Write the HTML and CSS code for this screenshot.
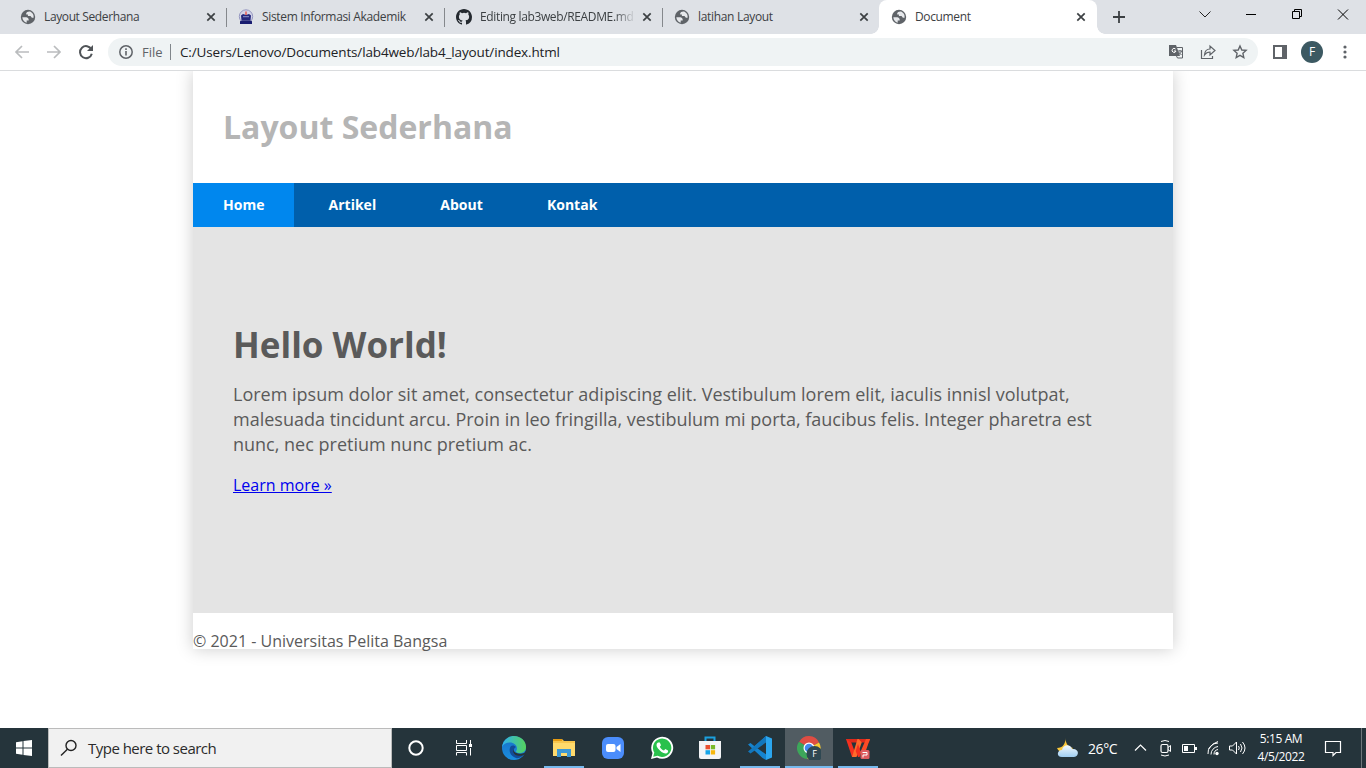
FILE: index.html
```html
<!DOCTYPE html>
<html lang="en">
<head>
<meta charset="utf-8">
<title>Document</title>
<link rel="stylesheet" href="styles.css">
</head>
<body>
<svg width="0" height="0" class="defs">
  <defs>
    <symbol id="globe" viewBox="0 0 16 16"><circle cx="8" cy="8" r="7.200" fill="#5f6368"/><path d="M2.300 8.200h4.200q2 .2 2.200 2.200v1H6.700v2.300Q2.800 12.600 2.300 8.200zM10.200 2.600Q6.500 2.300 6.200 4.300v1.300h1.700v1.500h2.600l1.400 1.700h1.700q.5-4.200-3.400-6.200z" fill="#e6e8eb"/></symbol>
    <symbol id="close" viewBox="0 0 10 10"><path d="M1.3 1.3 8.7 8.7M8.7 1.3 1.3 8.7" stroke="#3c4043" stroke-width="1.7"/></symbol>
    <linearGradient id="edge-top"><stop offset="0" stop-color="#2fb1ee"/><stop offset="1" stop-color="#55d35b"/></linearGradient>
    <linearGradient id="edge-body" x2="0" y2="1"><stop offset="0" stop-color="#176fc5"/><stop offset="1" stop-color="#1b8ee0"/></linearGradient>
    <linearGradient id="cloud" x2="0" y2="1"><stop offset="0" stop-color="#f4f9fd"/><stop offset="1" stop-color="#9fcdf1"/></linearGradient>
  </defs>
</svg>

<header class="browser">
  <div class="tabstrip">
    <div class="tab"><svg class="favicon"><use href="#globe"/></svg><span class="tab-title t1">Layout Sederhana</span><svg class="tab-close"><use href="#close"/></svg></div>
    <div class="tab divided"><svg class="favicon" viewBox="0 0 16 16"><circle cx="8" cy="7.5" r="6.7" fill="#d1d2e6" stroke="#9698c1"/><path d="M3 6.500 5 5l3 1 3-1 2 1.500-.5 5h-9z" fill="#24277c"/><path d="M5 7.200h6v1H5z" fill="#8d92cb"/><path d="M7.3 2.5h1.4V6H7.3z" fill="#e85147"/><path d="M2 12.300 4 11.500h8l2 .8V15H2z" fill="#191c70"/></svg><span class="tab-title t2">Sistem Informasi Akademik</span><svg class="tab-close"><use href="#close"/></svg></div>
    <div class="tab divided"><svg class="favicon" viewBox="0 0 16 16"><path fill="#24292f" d="M8 0C3.58 0 0 3.58 0 8c0 3.54 2.29 6.53 5.47 7.59.4.07.55-.17.55-.38 0-.19-.01-.82-.01-1.49-2.01.37-2.53-.49-2.69-.94-.09-.23-.48-.94-.82-1.13-.28-.15-.68-.52-.01-.53.63-.01 1.08.58 1.23.82.72 1.21 1.87.87 2.33.66.07-.52.28-.87.51-1.07-1.78-.2-3.64-.89-3.64-3.95 0-.87.31-1.59.82-2.15-.08-.2-.36-1.02.08-2.12 0 0 .67-.21 2.2.82a7.5 7.5 0 0 1 4 0c1.53-1.04 2.2-.82 2.2-.82.44 1.1.16 1.92.08 2.12.51.56.82 1.27.82 2.15 0 3.07-1.87 3.75-3.65 3.95.29.25.54.73.54 1.48 0 1.07-.01 1.93-.01 2.2 0 .21.15.46.55.38A8 8 0 0 0 16 8c0-4.42-3.58-8-8-8z"/></svg><span class="tab-title t3 faded">Editing lab3web/README.md</span><svg class="tab-close"><use href="#close"/></svg></div>
    <div class="tab divided"><svg class="favicon"><use href="#globe"/></svg><span class="tab-title t4">latihan Layout</span><svg class="tab-close"><use href="#close"/></svg></div>
    <div class="tab active"><svg class="favicon"><use href="#globe"/></svg><span class="tab-title t5">Document</span><svg class="tab-close"><use href="#close"/></svg></div>
    <svg class="new-tab" viewBox="0 0 12 12"><path d="M6 0v12M0 6h12" stroke="#3c4043" stroke-width="1.8"/></svg>
    <div class="window-controls">
      <svg viewBox="0 0 46 28"><path d="m17.5 11.5 5.5 5.500 5.500-5.500" fill="none" stroke="#222"/></svg>
      <svg viewBox="0 0 46 28"><path d="M18 14.500h10" stroke="#000"/></svg>
      <svg viewBox="0 0 46 28"><path d="M18.500 11.500h7v7h-7zM20.500 11.500v-2h7v7h-2" fill="none" stroke="#000"/></svg>
      <svg viewBox="0 0 46 28"><path d="m18 9.500 10 10m0-10-10 10" stroke="#000"/></svg>
    </div>
  </div>
  <div class="toolbar">
    <svg class="nav-buttons" viewBox="0 0 108 36"><g fill="none" stroke-width="1.7"><path d="M29 18H16m6-6-6 6 6 6M47 18h13m-6-6 6 6-6 6" stroke="#babcbe"/><path d="M91.400 15.500a6 6 0 1 0 .4 4.200" stroke="#505458" stroke-width="2"/></g><path d="M93 11v6h-6z" fill="#505458"/></svg>
    <div class="address">
      <svg class="info" viewBox="0 0 16 16"><circle cx="8" cy="8" r="6.200" fill="none" stroke="#5f6368" stroke-width="1.500"/><path d="M8 7v4.500M8 4.300v1.600" stroke="#5f6368" stroke-width="1.600"/></svg>
      <span class="scheme">File</span><span class="url">C:/Users/Lenovo/Documents/lab4web/lab4_layout/index.html</span>
      <svg class="address-actions" viewBox="0 0 82 18"><path d="M1 2h7l4 11H1z" fill="#5f6368"/><path d="M9 4.500h5.500v10.500H9.500L8.500 13M10 8h4m-2-1v1m1.500 0c-.5 2-2 3-3 3.500m0-2.500 3 3" stroke="#5f6368" fill="none"/><path d="M7.500 6A2 2 0 1 0 8 8H6" fill="none" stroke="#fff"/><g fill="none" stroke="#5f6368"><path d="M33.500 7v8.500h11V13" stroke-width="1.200"/><path d="M36.500 12c.3-4 2-6 5.500-6V3l5 4.500L42 12V9c-2.700 0-4 .8-5.500 3z" stroke-width="1.200"/><path d="m72 3 1.800 4 4.300.4-3.200 2.900.9 4.200-3.800-2.200-3.800 2.200.9-4.200-3.200-2.900 4.300-.4z" stroke-width="1.400"/></g></svg>
    </div>
    <svg class="side-panel" viewBox="0 0 14 14"><path d="M1 1h12v12H1z" fill="none" stroke="#5f6368" stroke-width="2"/><path d="M9 0h5v14H9z" fill="#5f6368"/></svg>
    <span class="avatar">F</span>
    <svg class="more" viewBox="0 0 4 14"><g fill="#5f6368"><circle cx="2" cy="2" r="1.600"/><circle cx="2" cy="7" r="1.600"/><circle cx="2" cy="12" r="1.600"/></g></svg>
  </div>
</header>

<main class="viewport">
  <div class="container">
    <header class="site-header"><h1>Layout Sederhana</h1></header>
    <nav class="site-nav"><a class="current">Home</a><a>Artikel</a><a>About</a><a>Kontak</a></nav>
    <section class="hero">
      <h1>Hello World!</h1>
      <p>Lorem ipsum dolor sit amet, consectetur adipiscing elit. Vestibulum lorem elit, iaculis innisl volutpat,<br>malesuada tincidunt arcu. Proin in leo fringilla, vestibulum mi porta, faucibus felis. Integer pharetra est<br>nunc, nec pretium nunc pretium ac.</p>
      <a href="#">Learn more »</a>
    </section>
    <footer class="site-footer"><p>© 2021 - Universitas Pelita Bangsa</p></footer>
  </div>
</main>

<footer class="taskbar">
  <div class="start"><svg width="16" height="16" viewBox="0 0 16 16"><path d="M0 2.200 6.500 1.300v6.200H0zM7.500 1.100 16 0v7.500H7.500zM0 8.500h6.500v6.200L0 13.800zM7.500 8.500H16V16l-8.500-1.100z" fill="#fff"/></svg></div>
  <div class="search"><svg width="18" height="18" viewBox="0 0 18 18"><g fill="none" stroke="#222" stroke-width="1.400"><circle cx="11" cy="6.500" r="5"/><path d="M7.400 10.200 1 16.500"/></g></svg><span>Type here to search</span></div>
  <div class="slot small"><svg viewBox="0 0 24 24"><circle cx="12" cy="12" r="6.700" fill="none" stroke="#fff" stroke-width="2"/></svg></div>
  <div class="slot small"><svg viewBox="0 0 24 24"><g fill="none" stroke="#fff"><path d="M4.500 4v3.500h10V4M4.500 19.500v-3h10v3M4.500 9.500h10v5h-10zM18.500 4v4M18.500 12v7.500"/></g><path d="M17 8h3v3h-3z" fill="#fff"/></svg></div>
  <div class="slot edge"><svg viewBox="0 0 24 24"><circle cx="12" cy="12" r="12" fill="url(#edge-body)"/><path d="M0 11C1 4 6 0 12 0c7 0 12 5 12 11 0 4-3 6-6.500 6-2 0-3.500-.7-3.500-1.500 0-.7 1-1.200 1-3C15 9 11.500 6.500 8 6.500c-4 0-7 2-8 4.500z" fill="url(#edge-top)"/><path d="M9 10c-3 4-1 10 5 12 3.500 1 7-2 8-4-4 2-8 .7-9.500-2C11 14 12 12 14 11c-1-1.500-3.500-2-5-1z" fill="#124c98"/><path d="M11.500 12.500c-1 4 5 6.500 10.500 4.500l2-2v3l-2.500 1c-4 2-10 .500-10.500-4z" fill="#26333a"/></svg></div>
  <div class="slot running"><svg viewBox="0 0 24 24"><path d="M1 3h9l2 2h11v15H1z" fill="#f8c64d"/><path d="M1 3h9v2H1z" fill="#e69b12"/><path d="M1 7h22v13H1z" fill="#ffda6c"/><path d="M5 13h14v8h-4v-4H9v4H5z" fill="#3d98d4"/></svg></div>
  <div class="slot"><svg viewBox="0 0 24 24"><rect x="1" y="1" width="22" height="22" rx="6" fill="#4b8dfb"/><rect x="5" y="8" width="9.500" height="8" rx="2" fill="#fff"/><path d="m15.500 11 4-3v8l-4-3z" fill="#fff"/></svg></div>
  <div class="slot"><svg viewBox="0 0 24 24"><path d="M1 23 2.500 17A11 11 0 1 1 7 21.500z" fill="#fff"/><path d="m3.200 20.800 1.100-4.200a9.200 9.200 0 1 1 3.300 3.200z" fill="#29c14c"/><path d="M8 6.500c-2 1-2 3.500 0 6s5 5 7.500 5c2 0 3-1.500 2.500-3L15.300 13l-1.300 1.500c-2-.7-3.400-2-4.200-3.800L11 9.300 9.800 6.500z" fill="#fff"/></svg></div>
  <div class="slot store"><svg viewBox="0 0 24 24"><path d="M7.500 5.500V1.500h9v4" fill="none" stroke="#1ba0df" stroke-width="2"/><path d="M1 5h22v16q0 2-2 2H3q-2 0-2-2z" fill="#f3f4f6"/><path d="M7.500 9H12v4.300H7.500z" fill="#e95030"/><path d="M12.800 9h4.300v4.300h-4.300z" fill="#79b928"/><path d="M7.500 14.200H12v4.300H7.500z" fill="#16a4e8"/><path d="M12.800 14.200h4.300v4.300h-4.300z" fill="#f7b70d"/></svg></div>
  <div class="slot running"><svg viewBox="0 0 24 24"><path d="M18 0 6.500 10.200 2.500 7 0 8.500 14.500 22l3.500 2 1-5-10-7 10-7z" fill="#1684cf"/><path d="M0 15.500 18 0v6.500L2.500 17.500z" fill="#1277bd"/><path d="m18 0 6 2.500v19L18 24z" fill="#2ba6ef"/></svg></div>
  <div class="slot running selected"><svg viewBox="0 0 24 24"><path d="M12 11.500 2.200 6A11 11 0 0 1 22 6.500z" fill="#df4d43"/><path d="m12 12-10-6.300A11 11 0 0 0 10.500 23z" fill="#3da65a"/><path d="M12 12 22 6.500A11 11 0 0 1 10.500 23z" fill="#f6c834"/><circle cx="12" cy="12" r="5.500" fill="#fff"/><circle cx="12" cy="12" r="4.300" fill="#4489ee"/><circle cx="17.500" cy="18" r="8" fill="#2f4852"/><text x="17.500" y="21" class="badge-letter">F</text></svg></div>
  <div class="slot running"><svg viewBox="0 0 24 24"><path d="M0 3h4l4.500 12L7 21H6z" fill="#f5301f"/><path d="M0 3h13l-1.200 3.500H5z" fill="#e02a1b"/><path d="M11.500 3H17l-6.500 18H6z" fill="#ff6a2b"/><path d="M12.500 3H24l-1.200 3.500h-7z" fill="#e02a1b"/><path d="M12 8l3 9-1.500 4h-1.500L9.700 15z" fill="#f5301f"/><path d="M20 3h4l-5 14h-5z" fill="#fb4a25"/><rect x="14.500" y="14" width="9" height="9" rx="1.500" fill="#dd5c5f"/><path d="M16.500 16.500h4.500v2.500h-4v2.500" fill="none" stroke="#fff"/></svg></div>
  <div class="tray">
    <svg class="weather" viewBox="0 0 24 22"><path d="M10 1c-1 5 2 9 7 10-3 6-14 6-16 0C7 11 9 7 10 1z" fill="#f9c73b"/><path d="M6 20c-6 0-5-7 0-7 1-6 9-6 10-1 7-1 8 7 2 8z" fill="url(#cloud)"/></svg>
    <span class="temp">26°C</span>
    <svg class="tray-icons" viewBox="0 0 116 20"><g fill="none" stroke="#fff"><path d="m2 12.500 5.500-5.500 5.500 5.500" stroke-width="1.200"/><rect x="28" y="6.500" width="7" height="8" rx="1.500" stroke-width="1.200"/><path d="m35 9.500 2.500-2v6L35 11.500M28 3.500q4-2 8 0M28 17q4 2 8 0"/><path d="M49.500 6.500h12v8h-12z"/><path d="M63 9v3" stroke-width="2"/><path d="M75 16a10 10 0 0 1 10-11M78 16.500a8 8 0 0 1 7-8M81 16.500a5 5 0 0 1 4-5M75.500 11q4-6 9.500-7.500"/><path d="M96.500 8h3l4-4v12l-4-4h-3zM105.500 8q1.500 2 0 4M107.500 6q3 4 0 8M109.500 4q5 6 0 12"/></g><path d="M51 8h4v5h-4z" fill="#fff"/><circle cx="84" cy="15.500" r="1.700" fill="#fff"/></svg>
    <div class="clock"><span>5:15 AM</span><span class="date">4/5/2022</span></div>
    <svg class="notice" viewBox="0 0 18 18"><path d="M1.500 2.500h15v11H12l-3 3v-3H1.500z" fill="none" stroke="#fff" stroke-width="1.200"/></svg>
  </div>
</footer>
</body>
</html>
```
FILE: styles.css
```css
* { box-sizing: border-box; }
body { margin: 0; width: 1366px; height: 768px; overflow: hidden; display: flex; flex-direction: column; background: #fff; font-family: "Open Sans", sans-serif; }
svg { display: block; flex: none; }

/* Browser window */
.browser { height: 71px; flex: none; border-bottom: 1px solid #dadcde; }
.tabstrip { height: 34px; display: flex; background: #dee1e6; padding-left: 8px; }
.tab { width: 218px; height: 34px; padding: 0 8px 0 12px; display: flex; align-items: center; }
.divided { background: linear-gradient(#85888c, #85888c) 0 8px / 1px 19px no-repeat; }
.tab.active { margin-left: -1px; background: #fff; border-radius: 8px 8px 0 0; position: relative; }
.tab.active::before, .tab.active::after { content: ""; position: absolute; bottom: 0; width: 8px; height: 8px; }
.tab.active::before { right: 100%; background: radial-gradient(circle at 0 0, transparent 7.5px, #fff 8px); }
.tab.active::after { left: 100%; background: radial-gradient(circle at 100% 0, transparent 7.5px, #fff 8px); }
.favicon { width: 16px; height: 16px; }
.tab-title { flex: 1; margin-left: 8px; overflow: hidden; white-space: nowrap; font-size: 12px; line-height: 20px; color: #3c4043; }
.tab-close { width: 10px; height: 10px; margin: 0 2px 0 6px; }
.t4 + .tab-close, .tab.active .tab-close { margin-right: 3px; }
.faded { -webkit-mask-image: linear-gradient(90deg, #000 86%, transparent); mask-image: linear-gradient(90deg, #000 86%, transparent); }
.t1 { letter-spacing: -.38px; }
.t2 { letter-spacing: -.34px; }
.t3 { letter-spacing: -.36px; }
.t4 { letter-spacing: -.32px; }
.t5 { letter-spacing: -.36px; }
.new-tab { width: 12px; height: 12px; margin: 11px 0 0 16px; }
.window-controls { display: flex; margin-left: auto; }
.window-controls svg { width: 46px; height: 28px; }
.toolbar { height: 36px; display: flex; align-items: center; }
.nav-buttons { width: 108px; height: 36px; }
.address { width: 1150px; height: 28px; border-radius: 14px; background: #eff3f4; display: flex; align-items: center; padding: 0 8px 0 10px; font-size: 14px; white-space: nowrap; }
.info { width: 16px; height: 16px; }
.scheme { color: #5f6368; margin-left: 8px; width: 29px; border-right: 1px solid #80868b; line-height: 16px; font-size: 13px; }
.url { color: #202124; margin-left: 9px; font-size: 13.5px; letter-spacing: -.14px; }
.address-actions { width: 82px; height: 18px; margin-left: auto; }
.side-panel { width: 14px; height: 14px; margin-left: 15px; }
.avatar { width: 22px; height: 22px; margin-left: 14px; border-radius: 50%; background: #3c5962; color: #fff; font: 12px/22px "Open Sans", sans-serif; text-align: center; }
.more { width: 4px; height: 14px; margin-left: 19.5px; }

/* Page */
.viewport { flex: 1; overflow: hidden; color: #5a5a5a; }
.container { width: 980px; height: 578px; margin: 0 auto; box-shadow: 0 0 16px #ccc; }
.site-header { height: 112px; padding: 40px 30px 0; }
.site-header h1 { margin: 0; font-size: 32px; line-height: 32px; color: #b5b5b5; }
.site-nav { display: flex; height: 44px; background: #005fab; }
.site-nav a { padding: 15px 30px; margin-right: 4.16px; color: #fff; font-size: 14px; font-weight: 700; line-height: 14px; }
.site-nav .current { background: #0087ee; }
.hero { height: 386px; background: #e4e4e4; padding: 100px 40px 0; font-size: 16px; line-height: 16px; }
.hero h1 { margin: 0; font-size: 35px; line-height: 35px; }
.hero p { margin: 20px 0 20px; font-size: 18px; line-height: 25px; white-space: nowrap; }
.hero a { color: #0000ee; }
.site-footer { padding-top: 20px; }
.site-footer p { margin: 0; font-size: 16px; line-height: 16px; }

/* Taskbar */
.taskbar { height: 40px; flex: none; display: flex; background: #25343b; color: #fff; }
.start { width: 48px; display: grid; place-items: center; }
.search { width: 344px; display: flex; align-items: center; padding-left: 11px; gap: 10px; background: #f1f1f1; border: 1px solid #bbb; color: #2b2b2b; font-size: 15px; letter-spacing: -.52px; }
.slot { width: 49px; height: 40px; display: grid; place-items: center; }
.slot.small { width: 48px; }
.slot.edge { width: 51px; padding-left: 1px; }
.slot.store { padding-right: 1px; }
.slot svg { width: 24px; height: 24px; }
.running { background: linear-gradient(#76b9ed, #76b9ed) 5px 38px / 40px 2px no-repeat; }
.selected { background: linear-gradient(#76b9ed, #76b9ed) 1px 38px / 48px 2px no-repeat, linear-gradient(#515c62, #515c62) 1px 0 / 48px 40px no-repeat; }
.badge-letter { font: 9px "Open Sans", sans-serif; fill: #fff; text-anchor: middle; }
.tray { flex: 1; margin-left: 174px; display: flex; align-items: center; border-right: 1px solid #6d777b; margin-right: 4px; }
.weather { width: 24px; height: 22px; }
.temp { width: 30px; margin-left: 8px; font-size: 14px; letter-spacing: -.4px; white-space: nowrap; }
.tray-icons { width: 116px; height: 20px; margin-left: 15px; }
.clock { width: 64px; display: flex; flex-direction: column; align-items: center; font-size: 12px; line-height: 18px; letter-spacing: -.4px; white-space: nowrap; }
.notice { width: 18px; height: 18px; margin-left: 11px; }
```
